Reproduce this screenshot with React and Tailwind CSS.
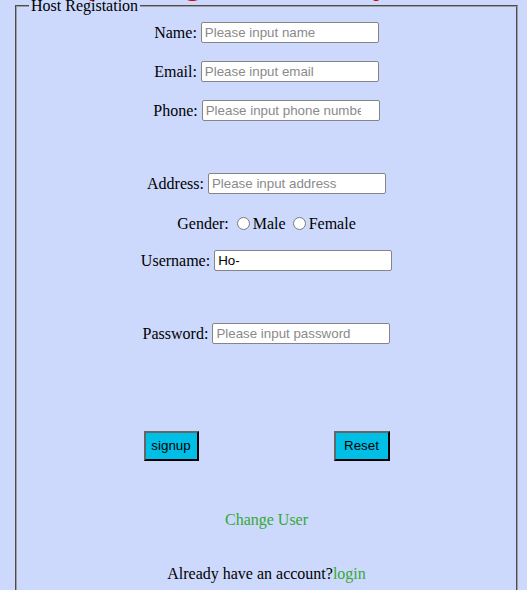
import React from 'react';

function Field({label, placeholder, value, type = 'text'}) {
  return (
    <div className="flex items-center justify-center h-[21px]">
      <label className="text-[16px] mr-[4px]">{label}</label>
      <input
        type={type}
        placeholder={placeholder}
        defaultValue={value}
        className="w-[178px] h-[21px] bg-white border border-[#858585] rounded-[2px] px-[3px] text-[13.33px] font-['Liberation_Sans',Arial,sans-serif] text-black placeholder:text-[#8a8a8a] outline-none"
      />
    </div>
  );
}

export default function App() {
  return (
    <div className="min-h-[590px] bg-[#ccd9fc] font-['Liberation_Serif',serif] text-black overflow-hidden">
      <div className="h-[3px] overflow-hidden">
        <div className="pl-[18px] text-[32px] font-bold text-[#e00000] leading-[37px] -mt-[35px] whitespace-nowrap">
          Hurry to Register and Stay
        </div>
      </div>
      <fieldset className="ml-[15px] mr-[9px] -mt-[6px] border-2 [border-style:groove] border-[#a0a0a0] px-[12px] pb-[40px]">
        <legend className="px-[2px] text-[16px] leading-[18px]">Host Registation</legend>
        <div className="flex flex-col pt-[7px]">
          <Field label="Name:" placeholder="Please input name" />
          <div className="mt-[18px]">
            <Field label="Email:" placeholder="Please input email" />
          </div>
          <div className="mt-[18px]">
            <Field label="Phone:" placeholder="Please input phone number" type="number" />
          </div>
          <div className="mt-[52px]">
            <Field label="Address:" placeholder="Please input address" />
          </div>
          <div className="mt-[19px] flex items-center justify-center h-[21px] text-[16px]">
            <span className="mr-[8px]">Gender:</span>
            <input type="radio" name="gender" className="w-[13px] h-[13px] m-0 mr-[3px]" />
            <span className="mr-[7px]">Male</span>
            <input type="radio" name="gender" className="w-[13px] h-[13px] m-0 mr-[3px]" />
            <span>Female</span>
          </div>
          <div className="mt-[16px]">
            <Field label="Username:" value="Ho-" />
          </div>
          <div className="mt-[52px]">
            <Field label="Password:" placeholder="Please input password" />
          </div>
          <div className="mt-[87px] mx-auto w-[246px] flex justify-between">
            <button className="h-[30px] w-[55px] bg-[#00bfe6] border-2 border-t-[#666] border-l-[#666] border-b-black border-r-black text-[13.33px] font-['Liberation_Sans',Arial,sans-serif] text-black">
              signup
            </button>
            <button className="h-[30px] w-[56px] bg-[#00bfe6] border-2 border-t-[#666] border-l-[#666] border-b-black border-r-black text-[13.33px] font-['Liberation_Sans',Arial,sans-serif] text-black">
              Reset
            </button>
          </div>
          <div className="mt-[49px] text-center text-[16px] leading-[20px] text-[#34a834]">
            Change User
          </div>
          <div className="mt-[34px] text-center text-[16px] leading-[20px]">
            Already have an account?<a className="text-[#34a834]">login</a>
          </div>
        </div>
      </fieldset>
    </div>
  );
}
